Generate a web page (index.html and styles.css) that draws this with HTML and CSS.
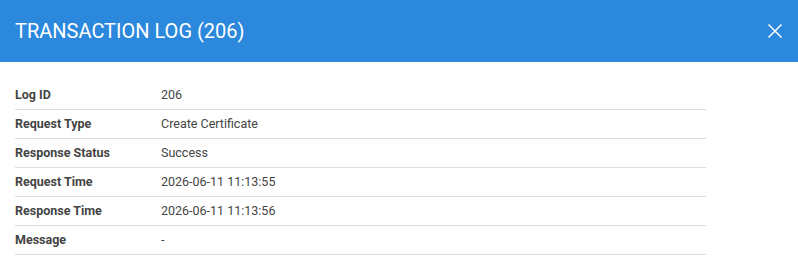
FILE: index.html
```html
<!DOCTYPE html>
<html>
<head>
    <title>Transaction Log</title>
    <link rel="stylesheet" href="styles.css">
</head>
<body>
    <div class="modal">
        <div class="modal-header">
            <h2 class="modal-title">TRANSACTION LOG (206)</h2>
            <button class="close-btn" aria-label="Close">
                <svg width="16" height="16" viewBox="0 0 16 16">
                    <path d="M1.5 1.5 L14.5 14.5 M14.5 1.5 L1.5 14.5" stroke="#fff" stroke-width="1.5" fill="none"/>
                </svg>
            </button>
        </div>
        <div class="modal-body">
            <table class="log-table">
                <tr><th>Log ID</th><td>206</td></tr>
                <tr><th>Request Type</th><td>Create Certificate</td></tr>
                <tr><th>Response Status</th><td>Success</td></tr>
                <tr><th>Request Time</th><td>2026-06-11 11:13:55</td></tr>
                <tr><th>Response Time</th><td>2026-06-11 11:13:56</td></tr>
                <tr><th>Message</th><td>-</td></tr>
            </table>
        </div>
    </div>
</body>
</html>
```

FILE: styles.css
```css
body {
    margin: 0;
    background-color: #fff;
    font-family: Roboto, "Liberation Sans", sans-serif;
}
.modal-header {
    background-color: #2b88dc;
    height: 62px;
    padding: 0 15px;
    display: flex;
    align-items: center;
    justify-content: space-between;
}
.modal-title {
    margin: 0;
    color: #fff;
    font-size: 20px;
    font-weight: 400;
}
.close-btn {
    background: none;
    border: none;
    padding: 0;
    width: 16px;
    height: 16px;
    cursor: pointer;
    display: flex;
}
.modal-body {
    padding: 19px 15px;
}
.log-table {
    width: 691px;
    border-collapse: collapse;
    font-size: 12.5px;
    color: #444;
}
.log-table th,
.log-table td {
    height: 27px;
    padding: 0 0 1px;
    text-align: left;
    border-bottom: 1px solid #ddd;
}
.log-table th {
    width: 146px;
    font-weight: 700;
}
```
